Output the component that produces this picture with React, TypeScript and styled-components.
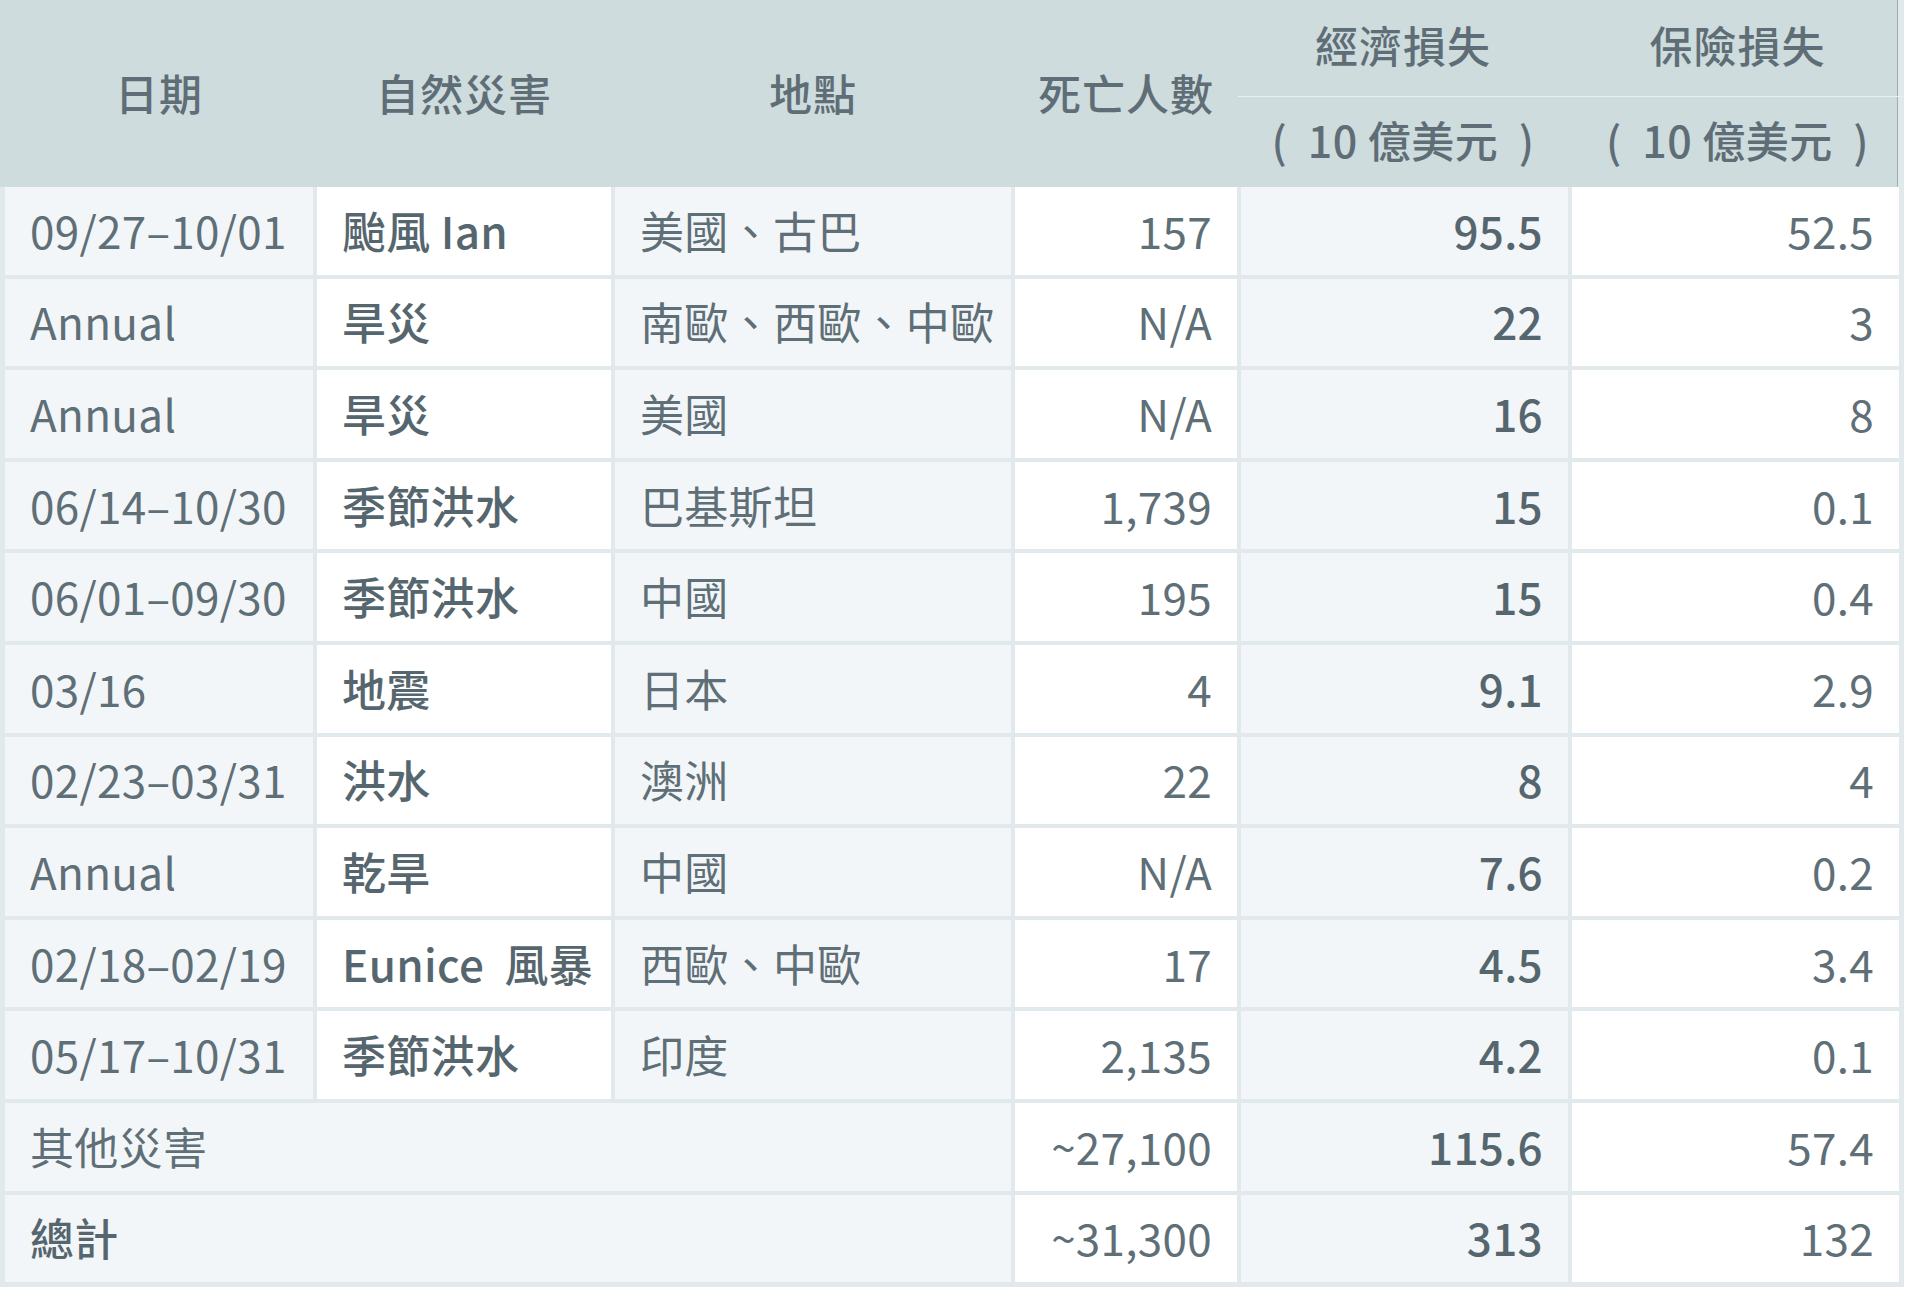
import React from "react";
import styled, { createGlobalStyle } from "styled-components";

const Global = createGlobalStyle`
  html, body { margin: 0; padding: 0; background: #ffffff; }
  body { font-family: "Noto Sans CJK TC", "Noto Sans", sans-serif; }
`;

const COLS = "308px 294px 396px 222px 327px 327px";

const Frame = styled.div`
  width: 1904px;
  background: #e2e9ed;
  padding-bottom: 5px;
  color: #5d6d75;
  font-family: "Noto Sans CJK TC", "Noto Sans", sans-serif;
`;

const Header = styled.div`
  width: 1898px;
  height: 187px;
  background: #cedcdd;
  border-right: 1px solid #9eadb1;
  display: grid;
  grid-template-columns: ${COLS};
  column-gap: 4px;
  padding-left: 5px;
  box-sizing: border-box;
`;

const HeadCell = styled.div`
  display: flex;
  align-items: center;
  justify-content: center;
  font-size: 43px;
  font-weight: 500;
  color: #5f6e76;
  letter-spacing: 1px;
  padding-bottom: 4px;
`;

const MoneyGroup = styled.div`
  grid-column: 5 / 7;
  display: grid;
  grid-template-rows: 96px 1fr;
  margin-left: -3px;
`;

const MoneyRow = styled.div<{ $line?: boolean }>`
  display: grid;
  grid-template-columns: 330px 331px;
  column-gap: 4px;
  border-top: ${(p) => (p.$line ? "1.5px solid #eaf0f1" : "none")};
`;

const MoneyCell = styled.div<{ $unit?: boolean }>`
  display: flex;
  align-items: center;
  justify-content: center;
  font-size: 43px;
  font-weight: 500;
  color: #5f6e76;
  letter-spacing: ${(p) => (p.$unit ? "0.5px" : "1px")};
  padding-bottom: ${(p) => (p.$unit ? "6px" : "8px")};
  white-space: pre;
`;

const Body = styled.div`
  display: grid;
  grid-template-columns: ${COLS};
  grid-auto-rows: 87.6px;
  gap: 4px;
  padding: 0 0 0 5px;
`;

const Cell = styled.div<{
  $shade?: boolean;
  $right?: boolean;
  $bold?: boolean;
  $span?: number;
}>`
  grid-column: ${(p) => (p.$span ? `span ${p.$span}` : "auto")};
  background: ${(p) => (p.$shade ? "#f3f6f8" : "#ffffff")};
  display: flex;
  align-items: center;
  justify-content: ${(p) => (p.$right ? "flex-end" : "flex-start")};
  padding: 0 25px 2px 25px;
  font-size: 44px;
  font-weight: ${(p) => (p.$bold ? 500 : 400)};
  color: ${(p) => (p.$bold ? "#56666e" : "#5f6f77")};
  letter-spacing: 0.3px;
  white-space: pre;
  box-sizing: border-box;
`;

type Row = [string, string, string, string, string, string];

const rows: Row[] = [
  ["09/27–10/01", "颱風 Ian", "美國、古巴", "157", "95.5", "52.5"],
  ["Annual", "旱災", "南歐、西歐、中歐", "N/A", "22", "3"],
  ["Annual", "旱災", "美國", "N/A", "16", "8"],
  ["06/14–10/30", "季節洪水", "巴基斯坦", "1,739", "15", "0.1"],
  ["06/01–09/30", "季節洪水", "中國", "195", "15", "0.4"],
  ["03/16", "地震", "日本", "4", "9.1", "2.9"],
  ["02/23–03/31", "洪水", "澳洲", "22", "8", "4"],
  ["Annual", "乾旱", "中國", "N/A", "7.6", "0.2"],
  ["02/18–02/19", "Eunice\u00a0\u00a0風暴", "西歐、中歐", "17", "4.5", "3.4"],
  ["05/17–10/31", "季節洪水", "印度", "2,135", "4.2", "0.1"],
];

export default function App() {
  return (
    <>
      <Global />
      <Frame>
        <Header>
          <HeadCell>日期</HeadCell>
          <HeadCell>自然災害</HeadCell>
          <HeadCell>地點</HeadCell>
          <HeadCell>死亡人數</HeadCell>
          <MoneyGroup>
            <MoneyRow>
              <MoneyCell>經濟損失</MoneyCell>
              <MoneyCell>保險損失</MoneyCell>
            </MoneyRow>
            <MoneyRow $line>
              <MoneyCell $unit>{"(  10 億美元  )"}</MoneyCell>
              <MoneyCell $unit>{"(  10 億美元  )"}</MoneyCell>
            </MoneyRow>
          </MoneyGroup>
        </Header>
        <Body>
          {rows.map((r, i) => (
            <React.Fragment key={i}>
              <Cell $shade>{r[0]}</Cell>
              <Cell $bold>{r[1]}</Cell>
              <Cell $shade>{r[2]}</Cell>
              <Cell $right>{r[3]}</Cell>
              <Cell $shade $right $bold>{r[4]}</Cell>
              <Cell $right>{r[5]}</Cell>
            </React.Fragment>
          ))}
          <Cell $shade $span={3}>其他災害</Cell>
          <Cell $right>~27,100</Cell>
          <Cell $shade $right $bold>115.6</Cell>
          <Cell $right>57.4</Cell>
          <Cell $shade $span={3} $bold>總計</Cell>
          <Cell $right>~31,300</Cell>
          <Cell $shade $right $bold>313</Cell>
          <Cell $right>132</Cell>
        </Body>
      </Frame>
    </>
  );
}
